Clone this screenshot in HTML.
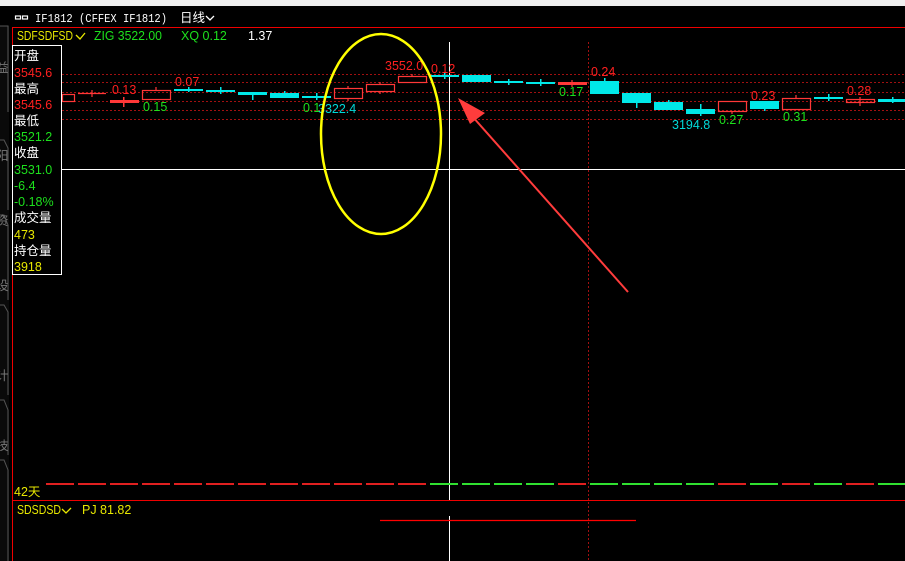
<!DOCTYPE html>
<html><head><meta charset="utf-8"><style>
html,body{margin:0;padding:0;background:#000;width:905px;height:561px;overflow:hidden}
svg{display:block}
text{font-family:"Liberation Sans","Noto Sans CJK SC",sans-serif;font-size:12.5px}
.m{font-family:"Liberation Mono","Noto Sans CJK SC",monospace;font-size:12px}
</style></head><body>
<svg width="905" height="561" viewBox="0 0 905 561" xmlns="http://www.w3.org/2000/svg">
<rect width="905" height="561" fill="#000"/>
<rect x="0" y="0" width="905" height="6" fill="#f0f0f0"/>
<rect x="0" y="26" width="9" height="535" fill="#0a0a0a"/>
<path d="M0 26H8V112M0 140H4L8 148V210M0 215H4L8 225V300M0 305H4L8 312V395M0 400H4L8 410V455M0 460H4L8 470V561" stroke="#555" fill="none"/>
<g fill="#777" font-size="11"><text x="-4" y="72">益</text><text x="-4" y="160">阳</text><text x="-4" y="225">资</text><text x="-4" y="290">设</text><text x="-4" y="380">计</text><text x="-4" y="450">技</text></g>
<g fill="none" stroke="#fff" stroke-width="1.2"><rect x="15.5" y="16" width="5" height="3"/><rect x="22.5" y="16" width="5" height="3"/></g>
<text class="m" x="35" y="22" fill="#fff" textLength="132" lengthAdjust="spacingAndGlyphs">IF1812  (CFFEX IF1812)</text>
<text x="180" y="22" fill="#fff">日线</text>
<path d="M206 16l4 4 4-4" stroke="#fff" fill="none" stroke-width="1.3"/>
<path d="M12 27.5H905M12.5 27V561M12 500.5H905" stroke="#e00" stroke-width="1"/>
<text x="17" y="40" fill="#e8e800" textLength="56" lengthAdjust="spacingAndGlyphs">SDFSDFSD</text>
<path d="M76 35l4 4 5-6" stroke="#e8e800" fill="none" stroke-width="1.3"/>
<text x="94" y="40" fill="#1de01d" textLength="68" lengthAdjust="spacingAndGlyphs">ZIG 3522.00</text>
<text x="181" y="40" fill="#1de01d">XQ 0.12</text>
<text x="248" y="40" fill="#fff">1.37</text>
<g stroke="#a01010" stroke-dasharray="2,2" stroke-width="1">
<path d="M62 74.5H905M62 82.5H905M62 92.5H905M62 101.5H905M62 110.5H905M62 119.5H905"/>
<path d="M588.5 42V561"/>
</g>
<path d="M449.5 42V500M449.5 516V561M12 169.5H905" stroke="#fff" stroke-width="1"/>
<g stroke="#ff3838" fill="none" stroke-width="1.2">
<rect x="62.5" y="94.5" width="12" height="7"/>
<path d="M78 93.5H106M92 90V97"/>
<rect x="142.5" y="90.5" width="28" height="9"/><path d="M156 87V90"/>
<rect x="334.5" y="88.5" width="28" height="10"/><path d="M348 86V88M348 99V101"/>
<rect x="366.5" y="84.5" width="28" height="7"/><path d="M380 82V84M380 92V94"/>
<rect x="398.5" y="76.5" width="28" height="6"/><path d="M412 74V76"/>
<rect x="718.5" y="101.5" width="28" height="10"/><path d="M732 112V114"/>
<rect x="782.5" y="98.5" width="28" height="11"/><path d="M796 95V98"/>
<rect x="846.5" y="99.5" width="28" height="3"/><path d="M860 97V106"/>
<path d="M572 80V87"/>
</g>
<g fill="#ff3838">
<rect x="110" y="100" width="29" height="3"/><rect x="123" y="97" width="1.5" height="10"/>
<rect x="558" y="82" width="29" height="3"/>
</g>
<g fill="#00e8e8">
<rect x="174" y="89" width="29" height="2"/><rect x="188" y="87" width="1.5" height="5"/>
<rect x="206" y="90" width="29" height="2"/><rect x="220" y="87" width="1.5" height="7"/>
<rect x="238" y="92" width="29" height="3"/><rect x="252" y="95" width="1.5" height="5"/>
<rect x="270" y="93" width="29" height="5"/><rect x="284" y="91" width="1.5" height="3"/>
<rect x="302" y="96" width="29" height="2"/><rect x="316" y="93" width="1.5" height="7"/>
<rect x="430" y="75" width="29" height="2"/><rect x="444" y="73" width="1.5" height="6"/>
<rect x="462" y="75" width="29" height="7"/>
<rect x="494" y="81" width="29" height="2"/><rect x="508" y="79" width="1.5" height="6"/>
<rect x="526" y="82" width="29" height="2"/><rect x="540" y="79" width="1.5" height="7"/>
<rect x="590" y="81" width="29" height="13"/><rect x="604" y="78" width="1.5" height="3"/>
<rect x="622" y="93" width="29" height="10"/><rect x="636" y="103" width="1.5" height="5"/>
<rect x="654" y="102" width="29" height="8"/><rect x="668" y="100" width="1.5" height="3"/>
<rect x="686" y="109" width="29" height="5"/><rect x="700" y="104" width="1.5" height="12"/>
<rect x="750" y="101" width="29" height="8"/><rect x="764" y="109" width="1.5" height="2"/>
<rect x="814" y="97" width="29" height="2"/><rect x="828" y="94" width="1.5" height="7"/>
<rect x="878" y="99" width="27" height="3"/><rect x="892" y="97" width="1.5" height="6"/>
</g>
<g>
<text x="112" y="94" fill="#ff2020">0.13</text>
<text x="143" y="111" fill="#1de01d">0.15</text>
<text x="175" y="86" fill="#ff2020">0.07</text>
<text x="303" y="112" fill="#1de01d">0.1</text>
<text x="318" y="113" fill="#00d8d8">3322.4</text>
<text x="385" y="70" fill="#ff2020">3552.0</text>
<text x="431" y="73" fill="#ff2020">0.12</text>
<text x="559" y="96" fill="#1de01d">0.17</text>
<text x="591" y="76" fill="#ff2020">0.24</text>
<text x="672" y="129" fill="#00d8d8">3194.8</text>
<text x="719" y="124" fill="#1de01d">0.27</text>
<text x="751" y="100" fill="#ff2020">0.23</text>
<text x="783" y="121" fill="#1de01d">0.31</text>
<text x="847" y="95" fill="#ff2020">0.28</text>
</g>
<rect x="12.5" y="45.5" width="49" height="229" fill="#000" stroke="#fff"/>
<g font-size="13">
<text x="14" y="60" fill="#fff">开盘</text>
<text x="14" y="77" fill="#ff2020">3545.6</text>
<text x="14" y="93" fill="#fff">最高</text>
<text x="14" y="109" fill="#ff2020">3545.6</text>
<text x="14" y="125" fill="#fff">最低</text>
<text x="14" y="141" fill="#1de01d">3521.2</text>
<text x="14" y="157" fill="#fff">收盘</text>
<text x="14" y="174" fill="#1de01d">3531.0</text>
<text x="14" y="190" fill="#1de01d">-6.4</text>
<text x="14" y="206" fill="#1de01d">-0.18%</text>
<text x="14" y="222" fill="#fff">成交量</text>
<text x="14" y="239" fill="#e8e800">473</text>
<text x="14" y="255" fill="#fff">持仓量</text>
<text x="14" y="271" fill="#e8e800">3918</text>
</g>
<ellipse cx="381" cy="134" rx="60" ry="100" fill="none" stroke="#ffff00" stroke-width="2.5"/>
<path d="M628 292L472 116" stroke="#ff3c3c" stroke-width="2"/>
<path d="M458 98L485 113L470 124Z" fill="#ff3c3c"/>
<g stroke-width="2">
<g stroke="#e02020">
<path d="M46 484H74M78 484H106M110 484H138M142 484H170M174 484H202M206 484H234M238 484H266M270 484H298M302 484H330M334 484H362M366 484H394M398 484H426M558 484H586M718 484H746M782 484H810M846 484H874"/>
</g>
<g stroke="#30e030">
<path d="M430 484H458M462 484H490M494 484H522M526 484H554M590 484H618M622 484H650M654 484H682M686 484H714M750 484H778M814 484H842M878 484H905"/>
</g>
</g>
<text x="14" y="496" fill="#e8e800">42天</text>
<text x="17" y="514" fill="#e8e800" textLength="44" lengthAdjust="spacingAndGlyphs">SDSDSD</text>
<path d="M62 509l4 4 5-5" stroke="#e8e800" fill="none" stroke-width="1.3"/>
<text x="82" y="514" fill="#e8e800">PJ 81.82</text>
<path d="M380 520.5H636" stroke="#ff0000" stroke-width="1.2"/>
</svg>
</body></html>
